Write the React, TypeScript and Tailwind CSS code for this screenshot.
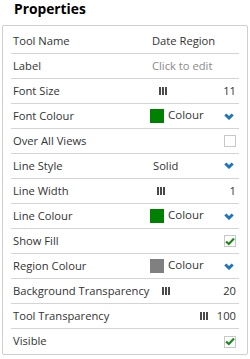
const Slider = ({ className = "" }: { className?: string }) => (
  <span className={`flex h-[8px] gap-[1px] ${className}`}>
    <span className="w-[2px] bg-[#4a4a4a]" />
    <span className="w-[2px] bg-[#4a4a4a]" />
    <span className="w-[2px] bg-[#4a4a4a]" />
  </span>
);

const Chevron = () => (
  <svg width="10" height="7" viewBox="0 0 10 7" className="ml-auto mr-[2px]">
    <polyline points="1.3,1.5 5,5 8.7,1.5" fill="none" stroke="#1c74bd" strokeWidth="3" />
  </svg>
);

const Check = ({ checked }: { checked?: boolean }) => (
  <span className="ml-auto flex h-[12px] w-[12px] items-center justify-center border border-[#c8c8c8] bg-white">
    {checked && (
      <svg width="10" height="9" viewBox="0 0 10 9">
        <polyline points="1,4.5 3.8,7 9,1.5" fill="none" stroke="#1d8a1d" strokeWidth="2.2" />
      </svg>
    )}
  </span>
);

const Swatch = ({ color }: { color: string }) => (
  <>
    <span className={`h-[14px] w-[14px] ${color}`} />
    <span className="ml-[4px] -mt-[2px] text-[11.5px]">Colour</span>
    <Chevron />
  </>
);

const rows: { label: string; value: React.ReactNode }[] = [
  { label: "Tool Name", value: <span className="pl-[2px]">Date Region</span> },
  { label: "Label", value: <span className="pl-[2px] text-[#8a8a8a]">Click to edit</span> },
  { label: "Font Size", value: (<><Slider className="ml-[9px]" /><span className="ml-auto">11</span></>) },
  { label: "Font Colour", value: <Swatch color="bg-[#008000]" /> },
  { label: "Over All Views", value: <Check /> },
  { label: "Line Style", value: (<><span className="pl-[3px]">Solid</span><Chevron /></>) },
  { label: "Line Width", value: (<><Slider className="ml-[7px]" /><span className="ml-auto">1</span></>) },
  { label: "Line Colour", value: <Swatch color="bg-[#008000]" /> },
  { label: "Show Fill", value: <Check checked /> },
  { label: "Region Colour", value: <Swatch color="bg-[#808080]" /> },
  { label: "Background Transparency", value: (<><Slider className="ml-[12px]" /><span className="ml-auto">20</span></>) },
  { label: "Tool Transparency", value: (<><Slider className="ml-auto mr-[9px]" /><span>100</span></>) },
  { label: "Visible", value: <Check checked /> },
];

export default function App() {
  return (
    <div className="h-[359px] w-[250px] bg-white font-['Open_Sans',sans-serif] text-[11.2px] text-[#333]">
      <h2 className="pl-[14px] text-[13.8px] font-bold leading-[18px] text-black">Properties</h2>
      <div className="mx-[2px] mt-[7px] rounded-[2px] border border-[#cfcfcf] px-[8px] pt-[3px]">
        {rows.map((r, i) => (
          <div
            key={r.label}
            className={`flex h-[25px] items-center pl-[2px] pr-[3px] ${i < rows.length - 1 ? "border-b border-[#d4d4d4]" : ""}`}
          >
            <span className="w-[137px] shrink-0 whitespace-nowrap">{r.label}</span>
            <div className="flex flex-1 items-center">{r.value}</div>
          </div>
        ))}
      </div>
    </div>
  );
}
